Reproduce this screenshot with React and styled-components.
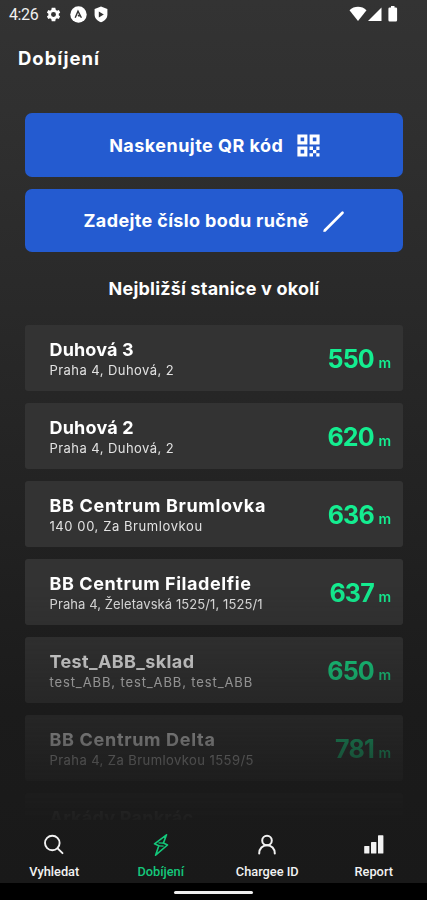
import React from "react";
import styled, { createGlobalStyle } from "styled-components";

const stations = [
  { name: "Duhová 3", track: 0.15, address: "Praha 4, Duhová, 2", addressTrack: 0.44, distance: 550 },
  { name: "Duhová 2", track: 0.2, address: "Praha 4, Duhová, 2", addressTrack: 0.44, distance: 620 },
  { name: "BB Centrum Brumlovka", track: 0.66, address: "140 00, Za Brumlovkou", addressTrack: 0.58, distance: 636 },
  { name: "BB Centrum Filadelfie", track: 0.58, address: "Praha 4, Želetavská 1525/1, 1525/1", addressTrack: 0.09, distance: 637 },
  { name: "Test_ABB_sklad", track: 0.38, address: "test_ABB, test_ABB, test_ABB", addressTrack: 0.88, distance: 650 },
  { name: "BB Centrum Delta", track: 0.68, address: "Praha 4, Za Brumlovkou 1559/5", addressTrack: 0.43, distance: 781 },
  { name: "Arkády Pankrác", track: 0.25, address: "", addressTrack: 0, distance: null },
];

export default function App() {
  return (
    <>
      <GlobalStyle />
      <Screen>
        <StatusBar>
          <Time>4:26</Time>
          <StatusIcons>
            <GearIcon />
            <AppIcon />
            <ShieldIcon />
          </StatusIcons>
          <SignalIcons />
        </StatusBar>
        <Title>Dobíjení</Title>
        {/*  */}
        <Actions>
          <ActionButton>
            <ActionLabel $track="0.47px">Naskenujte QR kód</ActionLabel>
            <QrIcon />
          </ActionButton>
          <ActionButton>
            <ActionLabel $track="0.36px">Zadejte číslo bodu ručně</ActionLabel>
            <PenIcon />
          </ActionButton>
        </Actions>
        <Subtitle>Nejbližší stanice v okolí</Subtitle>
        {/*  */}
        <StationList>
          {stations.map((s) => (
            <StationCard key={s.name}>
              <StationInfo>
                <StationName $track={s.track}>{s.name}</StationName>
                <Address $track={s.addressTrack}>{s.address}</Address>
              </StationInfo>
              {s.distance && (
                <Distance>
                  {s.distance}
                  <span>m</span>
                </Distance>
              )}
            </StationCard>
          ))}
        </StationList>
        {/*  */}
        <TabBar>
          <Tab>
            <SearchIcon />
            <TabLabel>Vyhledat</TabLabel>
          </Tab>
          <Tab $active>
            <BoltIcon />
            <TabLabel>Dobíjení</TabLabel>
          </Tab>
          <Tab>
            <UserIcon />
            <TabLabel>Chargee ID</TabLabel>
          </Tab>
          <Tab>
            <BarsIcon />
            <TabLabel>Report</TabLabel>
          </Tab>
        </TabBar>
        <HomeBar>
          <Handle />
        </HomeBar>
      </Screen>
    </>
  );
}

function GearIcon() {
  return (
    <svg width="17" height="17" viewBox="0 0 24 24" fill="#fff">
      <path d="M19.4 13a7.5 7.5 0 0 0 0-2l2.1-1.7-2-3.5-2.5 1a7.6 7.6 0 0 0-1.7-1L14.500 2.500h-5l-.6 3.300a7.600 7.600 0 0 0-1.700 1l-2.500-1-2 3.500L4.800 11a7.500 7.500 0 0 0 0 2l-2.100 1.700 2 3.500 2.500-1a7.600 7.600 0 0 0 1.700 1l.6 3.300h5l.6-3.300a7.600 7.600 0 0 0 1.700-1l2.500 1 2-3.500zM12 15.500a3.500 3.500 0 1 1 0-7 3.500 3.500 0 0 1 0 7z" />
    </svg>
  );
}

function AppIcon() {
  return (
    <svg width="17" height="17" viewBox="0 0 17 17">
      <circle cx="8.5" cy="8.5" r="8.2" fill="#fff" />
      <path d="M5.2 11.8 8 5.2l3.4 6.6M8 9l1.500 1.500" fill="none" stroke="#333" strokeWidth="1.4" />
    </svg>
  );
}

function ShieldIcon() {
  return (
    <svg width="14" height="17" viewBox="0 0 14 17">
      <path d="M7 .5 13.4 3v5.500c0 3.800-2.700 6.500-6.400 7.800C3.300 15 .6 12.300.6 8.500V3z" fill="#fff" />
      <path d="M4.800 5.500v6l5-3z" fill="#333" />
    </svg>
  );
}

function SignalIcons() {
  return (
    <svg width="50" height="17" viewBox="0 0 50 17" fill="#fff">
      <path d="M.5 4.200C5-.4 13-.4 17.500 4.200L9 15z" />
      <path d="M19 15 32.500 1.500V15z" />
      <path d="M42 0h3.500v1.400h1.300q1.300 0 1.300 1.300V14q0 1.500-1.300 1.500h-6.100q-1.300 0-1.300-1.500V2.700q0-1.300 1.300-1.300H42z" />
    </svg>
  );
}

function QrIcon() {
  return (
    <svg width="23" height="23" viewBox="0 0 23 23" fill="none">
      <path d="M2 2h6.800v6.800H2zM14.200 2H21v6.800h-6.800zM2 14.200h6.800V21H2z" stroke="#fff" strokeWidth="3.2" />
      <path d="M12.500 12.500h3.500v3.500h-3.500zM16 16h3.300v3.300H16zM19.300 12.500h3.200v3.500h-3.200zM12.500 19.300H16v3.200h-3.500zM19.300 19.300h3.200v3.200h-3.200z" fill="#fff" />
    </svg>
  );
}

function PenIcon() {
  return (
    <svg width="23" height="23" viewBox="0 0 23 23" fill="none">
      <path d="M3 20.200 20.500 2.700" stroke="#fff" strokeWidth="2.700" strokeLinecap="round" />
      <path d="M1.200 22l1-3.200 2.200 2.200z" fill="#fff" />
    </svg>
  );
}

function SearchIcon() {
  return (
    <svg width="22" height="22" viewBox="0 0 22 22" fill="none" stroke="currentColor" strokeWidth="1.9" strokeLinecap="round">
      <circle cx="9.300" cy="9" r="7.300" />
      <path d="M14.600 14.300 19.500 19.200" />
    </svg>
  );
}

function BoltIcon() {
  return (
    <svg width="22" height="22" viewBox="0 0 22 22" fill="none" stroke="currentColor" strokeWidth="1.6" strokeLinejoin="round">
      <path d="M16.500.8 4.500 9.800l4.300 2-3.200 9.400L17.500 11l-4.100-1.900z" />
      <path d="M8.500 8.800 13.200 9.200M8.800 11.800 13.600 12.200" strokeWidth="1.200" />
    </svg>
  );
}

function UserIcon() {
  return (
    <svg width="22" height="22" viewBox="0 0 22 22" fill="none" stroke="currentColor" strokeWidth="2" strokeLinecap="round">
      <circle cx="11" cy="6.500" r="4.800" />
      <path d="M3.200 19.500c0-5 3.300-8.200 7.800-8.200s7.800 3.200 7.800 8.200" />
    </svg>
  );
}

function BarsIcon() {
  return (
    <svg width="22" height="22" viewBox="0 0 22 22" fill="currentColor">
      <rect x="1.200" y="12" width="5.200" height="7.600" rx=".6" />
      <rect x="8" y="8" width="5.400" height="11.600" rx=".6" />
      <rect x="15" y="1.200" width="5.400" height="18.400" rx=".6" />
    </svg>
  );
}

const GlobalStyle = createGlobalStyle`
  * {
    box-sizing: border-box;
  }
  body {
    margin: 0;
    background: #000;
  }
  h1, h2, h3, p {
    margin: 0;
  }
`

const Screen = styled.div`
  width: 427px;
  height: 900px;
  display: flex;
  flex-direction: column;
  overflow: hidden;
  color: #fff;
  font-family: Inter, "Open Sans", sans-serif;
  background: linear-gradient(#333333 0, #303030 110px, #1b1b1b 710px, #191919 883px);
`

const StatusBar = styled.div`
  height: 28px;
  padding: 0 28px 0 9px;
  display: flex;
  align-items: center;
`

const Time = styled.div`
  width: 36px;
  font-family: Roboto, sans-serif;
  font-size: 16px;
  letter-spacing: -0.4px;
  color: #f0f0f0;
`

const StatusIcons = styled.div`
  flex: 1;
  display: flex;
  align-items: center;
  gap: 7.500px;
`

const Title = styled.h1`
  height: 85px;
  padding: 18px 18px 0;
  font-weight: 700;
  font-size: 18.5px;
  line-height: 24px;
  letter-spacing: 1px;
`

const Actions = styled.div`
  padding: 0 24px 0 25px;
  display: flex;
  flex-direction: column;
  gap: 12px;
`

const ActionButton = styled.button`
  height: 63.5px;
  padding: 2px 0 0 1px;
  display: flex;
  justify-content: center;
  align-items: center;
  gap: 13.5px;
  border: none;
  border-radius: 7px;
  background: #245bd0;
  color: #fff;
  font-family: inherit;
`

const ActionLabel = styled.span`
  font-weight: 700;
  font-size: 18px;
  line-height: 24px;
  letter-spacing: ${(props) => props.$track};
`

const Subtitle = styled.h2`
  height: 73px;
  padding: 25px 0 0 1px;
  text-align: center;
  font-weight: 700;
  font-size: 18px;
  line-height: 24px;
  letter-spacing: 0.2px;
`

const StationList = styled.div`
  height: 495px;
  padding: 0 24px 0 25px;
  display: flex;
  flex-direction: column;
  gap: 12.4px;
  overflow: hidden;
  mask-image: linear-gradient(#000 0, #000 260px, rgba(0, 0, 0, 0.67) 340px, rgba(0, 0, 0, 0.35) 415px, rgba(0, 0, 0, 0.16) 455px, rgba(0, 0, 0, 0.04) 485px, rgba(0, 0, 0, 0.02) 495px);
`

const StationCard = styled.div`
  flex: none;
  height: 65.6px;
  padding: 0 12px 0 24.5px;
  display: flex;
  justify-content: space-between;
  border-radius: 3px;
  background: #333;
`

const StationInfo = styled.div`
  padding-top: 14px;
`

const StationName = styled.h3`
  font-weight: 700;
  font-size: 18px;
  line-height: 22px;
  letter-spacing: ${(props) => props.$track}px;
`

const Address = styled.p`
  font-size: 13px;
  line-height: 18px;
  letter-spacing: ${(props) => props.$track}px;
  color: #e2e2e2;
`

const Distance = styled.div`
  padding-top: 18px;
  font-weight: 700;
  font-size: 25px;
  line-height: 32px;
  letter-spacing: -0.8px;
  color: #14ed90;
  span {
    margin-left: 4.5px;
    font-size: 14px;
    font-weight: 600;
    letter-spacing: 0;
  }
`

const TabBar = styled.div`
  height: 63px;
  padding: 14px 0 0 1px;
  display: grid;
  grid-template-columns: repeat(4, 1fr);
`

const Tab = styled.div`
  display: flex;
  flex-direction: column;
  align-items: center;
  color: ${(props) => (props.$active ? "#14c87b" : "#f2f2f2")};
  svg {
    height: 22px;
  }
`

const TabLabel = styled.span`
  margin-top: 8px;
  font-family: Roboto, sans-serif;
  font-weight: 500;
  font-size: 12.8px;
  line-height: 16px;
`

const HomeBar = styled.div`
  height: 17px;
  display: flex;
  justify-content: center;
  padding-top: 8px;
  background: #000;
`

const Handle = styled.div`
  width: 79px;
  height: 3px;
  border-radius: 2px;
  background: #eee;
`
